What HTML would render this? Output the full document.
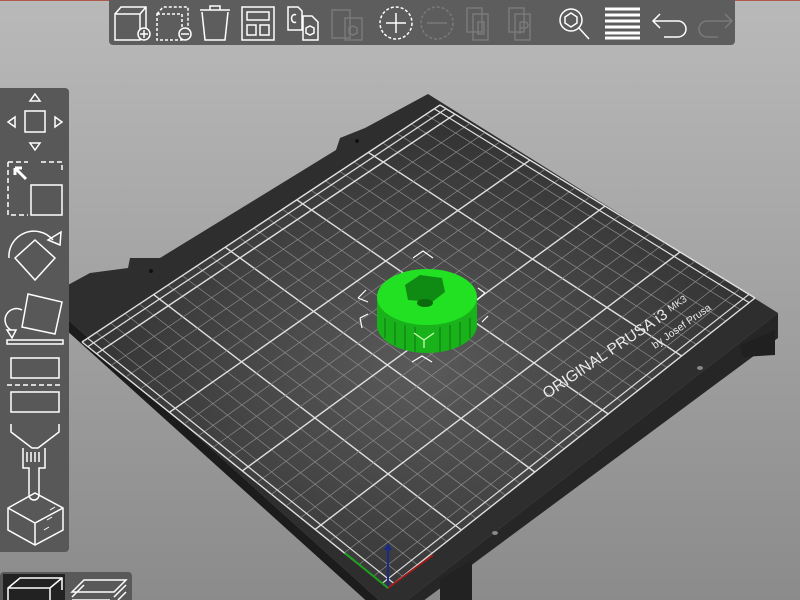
<!DOCTYPE html>
<html><head><meta charset="utf-8"><style>
html,body{margin:0;padding:0;width:800px;height:600px;overflow:hidden;}
body{background:linear-gradient(#b9b9b9,#8b8b8b);font-family:"Liberation Sans",sans-serif;position:relative;}
svg{position:absolute;left:0;top:0;}
</style></head><body>
<svg id="s" width="800" height="600" viewBox="0 0 800 600">
<rect x="0" y="0" width="800" height="1" fill="#b0584a"/>
<polygon points="44,298 44,310 392,624 392,612" fill="#1c1c1c"/>
<polygon points="392,612 392,624 778,338 778,313" fill="#262626"/>
<polygon points="740,345 775,330 775,355 742,357" fill="#202020"/>
<polygon points="440,580 472,560 472,600 440,600" fill="#222"/>
<polygon points="44,298 90,273 128,268 130,258 160,258 336,150 340,138 365,128 428,94 778,313 392,612" fill="#2e2e2e"/>
<defs><radialGradient id="g" cx="0.5" cy="0.55" r="0.6"><stop offset="0" stop-color="#5a5a5a"/><stop offset="1" stop-color="#2c2c2c"/></radialGradient></defs>
<polygon points="82,342 440,105 755,298 388,588" fill="url(#g)"/>
<g id="grid" stroke="#bdbdbd" fill="none"></g>
<circle cx="151" cy="271" r="2" fill="#111"/><circle cx="357" cy="141" r="2" fill="#111"/>
<ellipse cx="495" cy="533" rx="3" ry="2" fill="#888"/><ellipse cx="700" cy="368" rx="3" ry="2" fill="#888"/>
<text transform="translate(547,399) rotate(-34)" fill="#eaeaea" font-size="15.5" font-family="Liberation Sans">ORIGINAL PRUSA i3 <tspan font-size="10" dy="-3">MK3</tspan></text>
<text transform="translate(655,349) rotate(-35)" fill="#eaeaea" font-size="10.5" font-family="Liberation Sans">by Josef Prusa</text>
<line x1="388" y1="588" x2="388" y2="547" stroke="#1a2a8a" stroke-width="2"/>
<polygon points="384,550 392,550 388,543" fill="#1a2a8a"/>
<line x1="388" y1="588" x2="433" y2="555" stroke="#a01a1a" stroke-width="2"/>
<line x1="388" y1="588" x2="345" y2="553" stroke="#1aa01a" stroke-width="2"/>
<g stroke="#fff" stroke-width="1.2" fill="none">
<path d="M413,258 L423,251 L433,258"/><path d="M358,298 L366,290 M358,298 L368,302"/>
<path d="M485,293 L478,288 M485,293 L477,300"/><path d="M360,318 L368,314 M360,318 L362,328"/>
<path d="M412,362 L422,356 L432,362"/><path d="M488,316 L482,322"/>
</g>
<path d="M377,297 L377,325 A50,28 0 0 0 477,325 L477,297 Z" fill="#19b21b"/>
<g stroke="#128a14" stroke-width="1.5">
<line x1="385" y1="318" x2="385" y2="338"/><line x1="395" y1="322" x2="395" y2="345"/><line x1="405" y1="325" x2="405" y2="350"/><line x1="415" y1="327" x2="415" y2="352"/><line x1="440" y1="327" x2="440" y2="352"/><line x1="450" y1="325" x2="450" y2="350"/><line x1="460" y1="322" x2="460" y2="346"/><line x1="470" y1="318" x2="470" y2="339"/>
</g>
<ellipse cx="427" cy="297" rx="50" ry="28" fill="#22e022"/>
<polygon points="405,285 420,275 442,278 445,292 432,302 408,300" fill="#0f8a12"/>
<ellipse cx="425" cy="303" rx="8" ry="4" fill="#0a6a0c"/>
<path d="M414,333 L424,340 L434,333 M424,340 L424,348" stroke="#c8ffb0" stroke-width="1.3" fill="none"/>
</svg>

<div style="position:absolute;left:109px;top:0;width:626px;height:45px;background:#5d5d5d;border-radius:0 0 4px 4px;"></div>
<svg width="800" height="50" viewBox="0 0 800 50" style="z-index:2" stroke="#fff" stroke-width="1.5" fill="none">
<path d="M115,14 L121,7 L146,7 L146,30 M115,14 L140,14 L140,40 L115,40 Z M140,14 L146,7"/><circle cx="144" cy="34" r="6" fill="#5d5d5d"/><path d="M140,34 H148 M144,30 V38"/>
<path d="M157,14 L163,7 L188,7 L188,30 M157,14 L182,14 L182,40 L157,40 Z" stroke-dasharray="3,2"/><circle cx="185" cy="34" r="6" fill="#5d5d5d"/><path d="M181,34 H189"/>
<path d="M200,10 H230 M210,10 V6 H220 V10 M202,12 L205,40 H225 L228,12"/>
<rect x="242" y="7" width="32" height="33"/><rect x="247" y="12" width="22" height="8"/><rect x="247" y="25" width="9" height="10"/><rect x="260" y="25" width="9" height="10"/>
<path d="M288,7 H298 L302,11 V30 H288 Z M303,16 H312 L318,22 V40 H303 Z"/><path d="M310,26 L314,28 V33 L310,35 L306,33 V28 Z"/><path d="M296,15 A3,4 0 1 0 296,22"/>
<g stroke="#7a7a7a"><path d="M332,10 H350 V38 H332 Z M345,18 H362 V40 H345 Z"/><path d="M353,26 L357,28 V33 L353,35 L349,33 V28 Z"/></g>
<circle cx="396" cy="23" r="16" stroke-dasharray="3,2"/><path d="M386,23 H406 M396,13 V33"/>
<g stroke="#7a7a7a"><circle cx="437" cy="23" r="16" stroke-dasharray="3,2"/><path d="M427,23 H447"/>
<path d="M467,8 H482 V32 H467 Z M473,14 H488 V40 H473 Z M478,22 H484 V34 H478 Z"/>
<path d="M509,8 H524 V32 H509 Z M515,14 H530 V40 H515 Z M520,22 V34 M520,22 H525 A3,3 0 0 1 525,28 H520"/>
<path d="M725,14 L732,21 L725,28 M732,21 H707 A8,8 0 0 0 707,37 H718"/></g>
<circle cx="571" cy="20" r="11"/><path d="M579,28 L589,39"/><path d="M571,13 L577,17 V23 L571,27 L565,23 V17 Z"/>
<g stroke-width="3"><path d="M605,9 H640 M605,15 H640 M605,21 H640 M605,27 H640 M605,33 H640 M605,38 H640"/></g>
<path d="M660,14 L653,21 L660,28 M653,21 H678 A8,8 0 0 1 678,37 H664"/>
</svg>

<div style="position:absolute;left:0;top:88px;width:69px;height:464px;background:#585858;border-radius:0 4px 4px 0;"></div>
<svg width="80" height="600" viewBox="0 0 80 600" style="z-index:2" stroke="#fff" stroke-width="1.5" fill="none">
<path d="M35,94 L40,101 H30 Z M35,150 L40,143 H30 Z M8,122 L15,117 V127 Z M62,122 L55,117 V127 Z"/><rect x="25" y="111" width="20" height="21"/>
<path d="M8,162 H28 M8,162 V215 H28 M41,162 H62 V172" stroke-dasharray="5,3"/><rect x="31" y="185" width="31" height="30"/>
<path d="M15,168 L26,179 M15,168 H22 M15,168 V175" stroke-width="3"/>
<path d="M9,258 A25,25 0 0 1 53,240"/><path d="M48,240 L61,232 L60,245 Z"/><path d="M35,240 L55,258 L35,280 L15,258 Z"/>
<path d="M28,294 L62,302 L55,334 L22,327 Z"/><path d="M22,310 A10,10 0 0 0 11,330"/><path d="M7,330 L12,338 L16,330 Z"/><rect x="7" y="340" width="56" height="4"/>
<rect x="11" y="358" width="48" height="20"/><path d="M7,385 H62" stroke-dasharray="5,3"/><rect x="11" y="392" width="48" height="20"/>
<path d="M11,424 V432 L32,448 H38 L59,432 V424"/><path d="M23,448 V468 H29 V495 A5,5 0 0 0 39,495 V468 H45 V448 M27,452 V462 M31,452 V462 M35,452 V462 M39,452 V462"/>
<path d="M8,508 L35,493 L63,508 L63,530 L35,545 L8,530 Z M8,508 L35,523 L63,508 M35,523 V545"/><path d="M50,510 L55,507 M47,520 L52,517 M44,530 L49,527" stroke-width="1"/>
</svg>

<div style="position:absolute;left:0;top:572px;width:132px;height:28px;background:#595959;border-radius:4px 4px 0 0;"></div>
<div style="position:absolute;left:3px;top:574px;width:62px;height:26px;background:#222;"></div>
<svg width="140" height="600" viewBox="0 0 140 600" style="z-index:2" stroke="#fff" stroke-width="1.5" fill="none">
<path d="M8,600 V588 L20,578 H62 L62,590 M8,588 H50 L62,578 M50,588 V600"/>
<path d="M72,592 L84,580 H126 L114,592 Z M72,597 L84,585 M114,597 L126,585 M72,600 H110 M118,600 L126,592"/>
</svg>

<script>
(function(){
var L=[82,342],T=[440,105],R=[755,298],B=[388,588];
function P(x,y){var u=x/250,v=y/210;return [B[0]*(1-u)*(1-v)+R[0]*u*(1-v)+L[0]*(1-u)*v+T[0]*u*v,B[1]*(1-u)*(1-v)+R[1]*u*(1-v)+L[1]*(1-u)*v+T[1]*u*v];}
var g=document.getElementById('grid'),h='';
function ln(a,b,w,c){h+='<line x1="'+a[0].toFixed(1)+'" y1="'+a[1].toFixed(1)+'" x2="'+b[0].toFixed(1)+'" y2="'+b[1].toFixed(1)+'" stroke-width="'+w+'" stroke="'+c+'"/>';}
for(var x=0;x<=250;x+=10){var m=(x%50==0);ln(P(x,0),P(x,210),m?1.4:0.7,m?'#e0e0e0':'#8a8a8a');}
for(var y=0;y<=210;y+=10){var m=(y%50==0)||y==210;ln(P(0,y),P(250,y),m?1.4:0.7,m?'#e0e0e0':'#8a8a8a');}
ln(P(0,4),P(250,4),1.2,'#e0e0e0');ln(P(0,206),P(250,206),1.2,'#e0e0e0');
ln(P(4,0),P(4,210),1.2,'#e0e0e0');ln(P(246,0),P(246,210),1.2,'#e0e0e0');
g.innerHTML=h;
})();
</script>
</body></html>
